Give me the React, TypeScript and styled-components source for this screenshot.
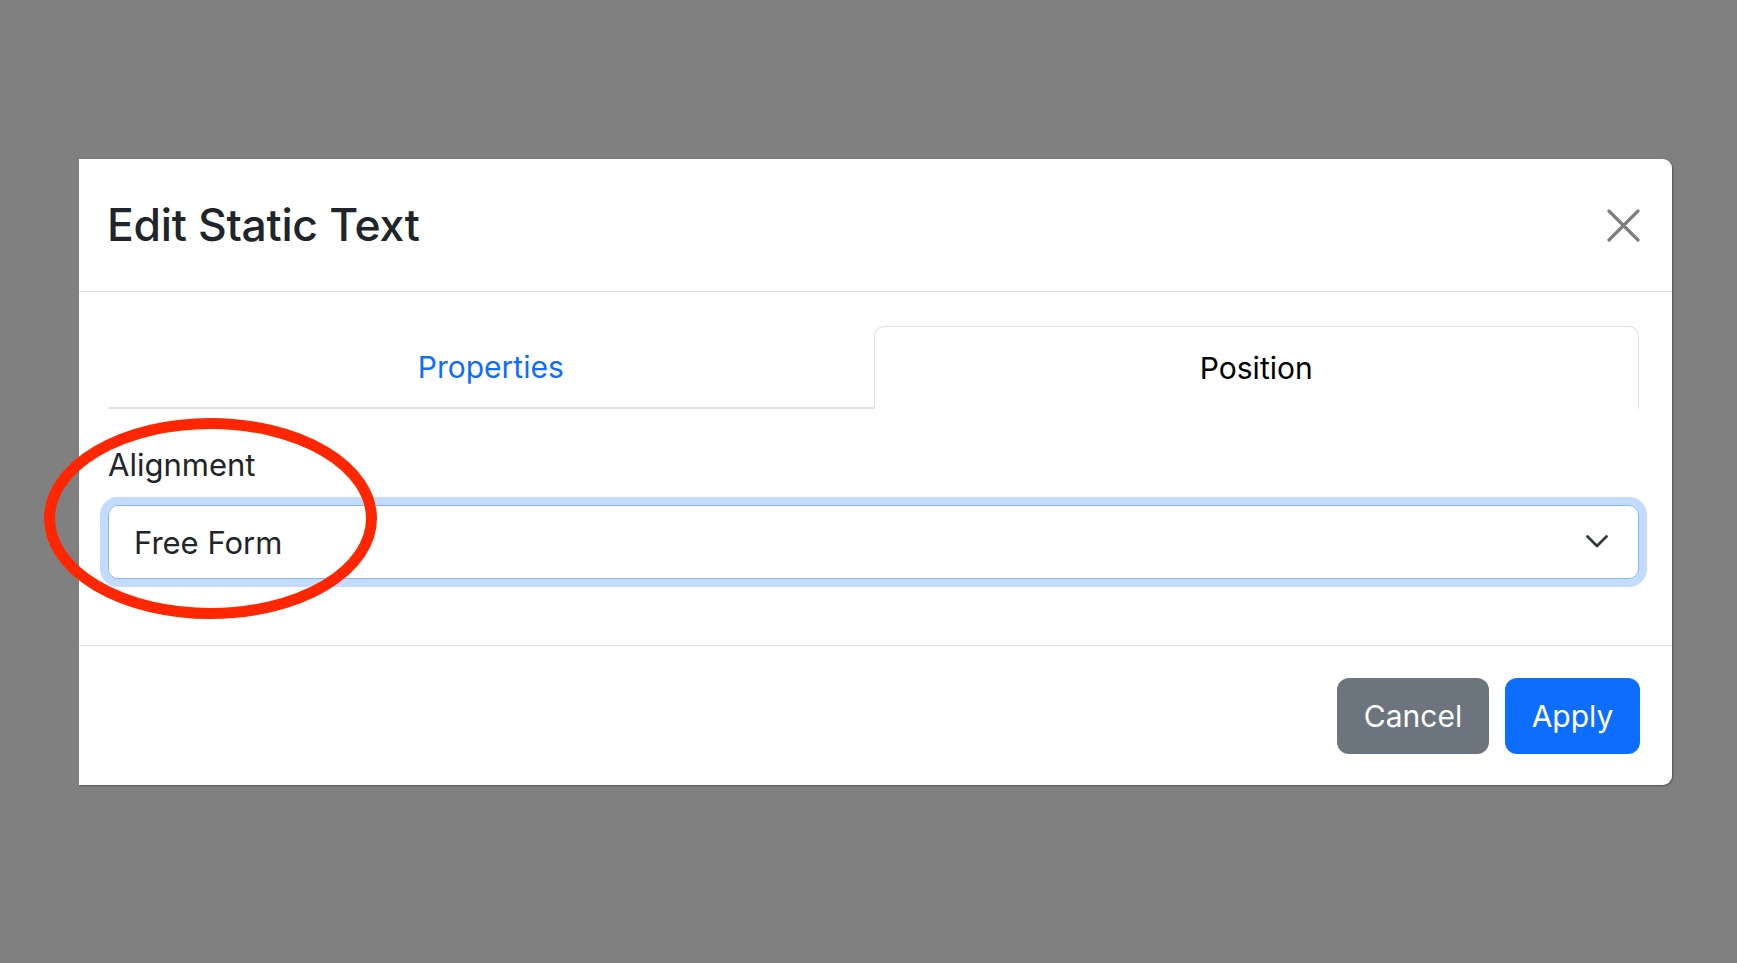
import { createGlobalStyle } from 'styled-components';
import styled from 'styled-components';

const GlobalStyle = createGlobalStyle`
    html, body {
        margin: 0;
        padding: 0;
        background: #808080;
        font-family: Inter, 'Noto Sans', 'Liberation Sans', sans-serif;
    }
    #root {
        min-height: 963px;
    }
`;

const App = () => {
    return (
        <>
            <GlobalStyle />
            <Backdrop>
                <Modal>
                    <Header>
                        <Title>Edit Static Text</Title>
                        <CloseButton aria-label="Close">
                            <svg width="33" height="33" viewBox="0 0 33 33">
                                <path
                                    d="M2 2 L31 31 M31 2 L2 31"
                                    stroke="#7f7f7f"
                                    strokeWidth="3.2"
                                    strokeLinecap="round"
                                />
                            </svg>
                        </CloseButton>
                    </Header>

                    <Body>
                        <Tabs>
                            <Tab>Properties</Tab>
                            <Tab $active>Position</Tab>
                        </Tabs>

                        <Label>Alignment</Label>
                        <Select>
                            <span>Free Form</span>
                            <svg width="22" height="14" viewBox="0 0 22 14">
                                <path
                                    d="M1.5 1.5 L11 11 L20.5 1.5"
                                    fill="none"
                                    stroke="#343a40"
                                    strokeWidth="2.8"
                                    strokeLinecap="round"
                                    strokeLinejoin="round"
                                />
                            </svg>
                        </Select>
                    </Body>

                    <Footer>
                        <Button $variant="secondary" $width={152}>
                            Cancel
                        </Button>
                        <Button $variant="primary" $width={135}>
                            Apply
                        </Button>
                    </Footer>

                    <Highlight width="345" height="213" viewBox="0 0 345 213">
                        <ellipse
                            cx="172.5"
                            cy="106.5"
                            rx="161"
                            ry="95"
                            fill="none"
                            stroke="#ff2600"
                            strokeWidth="11"
                        />
                    </Highlight>
                </Modal>
            </Backdrop>
        </>
    );
};

export default App;

const Backdrop = styled.div`
    padding: 159px 0 0 79px;
    min-height: 963px;
    box-sizing: border-box;
`;

const Modal = styled.div`
    position: relative;
    width: 1593px;
    background: #fff;
    border-radius: 0 9px 9px 0;
    box-shadow: 1px 1px 2px rgba(0, 0, 0, 0.35);
    color: #212529;
`;

const Header = styled.div`
    height: 133px;
    box-sizing: border-box;
    padding: 0 32px 0 28px;
    display: flex;
    align-items: center;
    justify-content: space-between;
    border-bottom: 1px solid #dee2e6;
`;

const Title = styled.h1`
    margin: 0;
    font-size: 44.5px;
    font-weight: 500;
    letter-spacing: -0.3px;
    color: #212529;
`;

const CloseButton = styled.button`
    border: none;
    background: none;
    padding: 0;
    width: 33px;
    height: 33px;
    display: flex;
    cursor: pointer;
`;

const Body = styled.div`
    padding: 34px 33px 66px 29px;
`;

const Tabs = styled.div`
    display: flex;
    height: 83px;
`;

const Tab = styled.div<{ $active?: boolean }>`
    flex: 1 1 0;
    box-sizing: border-box;
    display: flex;
    align-items: center;
    justify-content: center;
    font-size: 30px;
    color: ${(p) => (p.$active ? '#000' : '#0d6efd')};
    border: 1px solid ${(p) => (p.$active ? '#dee2e6' : 'transparent')};
    border-bottom: ${(p) => (p.$active ? 'none' : '2px solid #dee2e6')};
    border-radius: ${(p) => (p.$active ? '10px 10px 0 0' : '0')};
    cursor: pointer;
`;

const Label = styled.div`
    margin-top: 33px;
    font-size: 31px;
    line-height: 45px;
    color: #212529;
`;

const Select = styled.div`
    margin-top: 18px;
    height: 74px;
    box-sizing: border-box;
    padding: 0 30px 0 25px;
    display: flex;
    align-items: center;
    justify-content: space-between;
    border: 1px solid #86b7fe;
    border-radius: 10px;
    box-shadow: 0 0 0 8px rgba(13, 110, 253, 0.25);
    font-size: 31px;
    color: #212529;
`;

const Footer = styled.div`
    border-top: 1px solid #dee2e6;
    padding: 32px 32px 31px;
    display: flex;
    justify-content: flex-end;
    gap: 16px;
`;

const Button = styled.button<{ $variant: 'primary' | 'secondary'; $width: number }>`
    width: ${(p) => p.$width}px;
    height: 76px;
    border: none;
    border-radius: 12px;
    font-family: inherit;
    font-size: 30px;
    color: #fff;
    background: ${(p) => (p.$variant === 'primary' ? '#0d6efd' : '#6c757d')};
    cursor: pointer;
`;

const Highlight = styled.svg`
    position: absolute;
    left: -41px;
    top: 253px;
    pointer-events: none;
`;
